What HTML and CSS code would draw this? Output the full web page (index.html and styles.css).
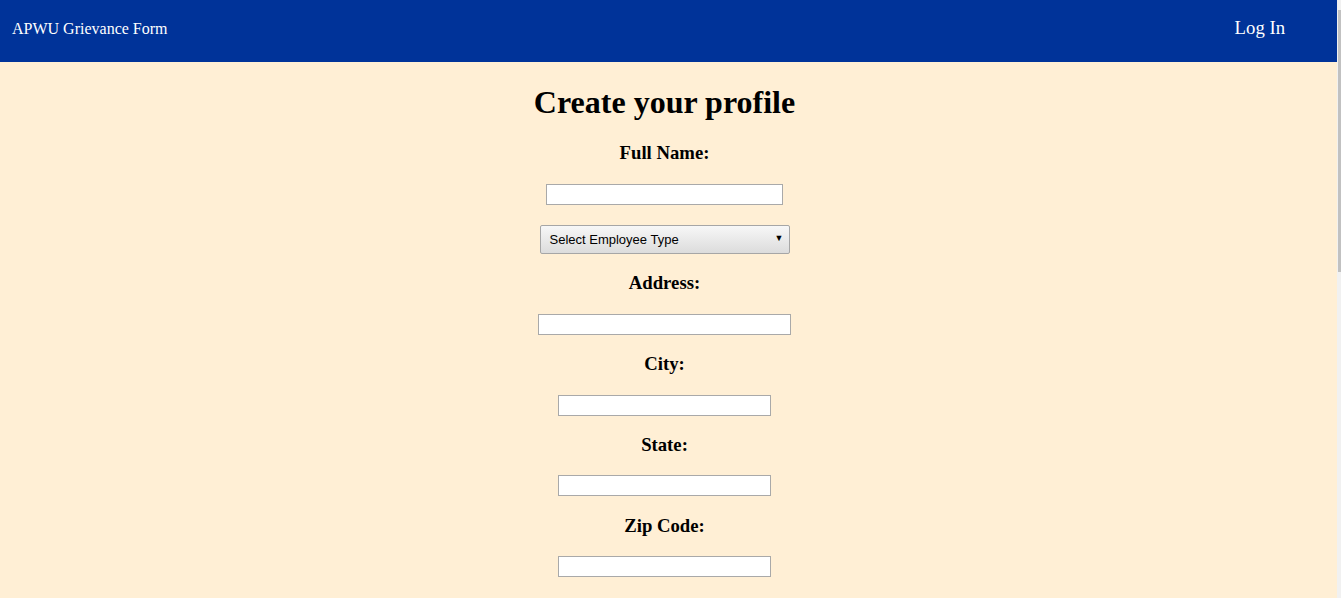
FILE: index.html
```html
<!DOCTYPE html>
<html lang="en">
<head>
<meta charset="utf-8">
<title>APWU Grievance Form</title>
<link rel="stylesheet" href="styles.css">
</head>
<body>
<div class="page">
  <header class="topbar">
    <a class="brand" href="#">APWU Grievance Form</a>
    <a class="login" href="#">Log In</a>
  </header>
  <main class="profile">
    <h1 class="title">Create your profile</h1>
    <form class="form">
      <h3 class="label">Full Name:</h3>
      <input class="field field-name" type="text">
      <div class="select">
        <span class="select-text">Select Employee Type</span>
        <span class="select-arrow">&#9660;</span>
      </div>
      <h3 class="label">Address:</h3>
      <input class="field field-address" type="text">
      <h3 class="label">City:</h3>
      <input class="field field-short" type="text">
      <h3 class="label">State:</h3>
      <input class="field field-short" type="text">
      <h3 class="label">Zip Code:</h3>
      <input class="field field-short" type="text">
    </form>
  </main>
</div>
<div class="scrollbar"><div class="thumb"></div></div>
</body>
</html>
```
FILE: styles.css
```css
html, body {
  margin: 0;
  height: 100%;
  overflow: hidden;
}
body {
  display: flex;
  background: #ffefd5;
  font-family: "Liberation Serif", "Times New Roman", serif;
}
.page {
  flex: 1;
  min-width: 0;
}
.topbar {
  height: 62px;
  background: #003399;
  display: flex;
  align-items: center;
  justify-content: space-between;
  padding: 0 52px 0 12px;
}
.brand {
  color: #ffffff;
  text-decoration: none;
  font-size: 16px;
  margin-top: -4px;
}
.login {
  color: #ffffff;
  text-decoration: none;
  font-size: 18.72px;
  margin-top: -6px;
}
.profile {
  padding-right: 8px;
  text-align: center;
}
.title {
  font-size: 32px;
  font-weight: bold;
  margin: 22px 0 21.44px;
  line-height: 37px;
}
.form {
  display: flex;
  flex-direction: column;
  align-items: center;
}
.label {
  font-size: 18.72px;
  font-weight: bold;
  margin: 18.72px 0;
  line-height: 22.5px;
}
.form .label:first-child {
  margin-top: 0;
}
.field {
  box-sizing: border-box;
  height: 21px;
  border: 1px solid #a9a9a9;
  background: #ffffff;
  padding: 0 2px;
  margin: 0;
  font-family: "Liberation Sans", Arial, sans-serif;
  font-size: 13px;
}
.field-name { width: 237px; }
.field-address { width: 253px; }
.field-short { width: 213px; }
.select {
  box-sizing: border-box;
  width: 250px;
  height: 29px;
  margin-top: 20px;
  border: 1px solid #a6a6a6;
  border-radius: 2px;
  background: linear-gradient(#f7f7f7, #dcdcdc);
  display: flex;
  align-items: center;
  justify-content: space-between;
  padding: 0 5px 0 9px;
  font-family: "Liberation Sans", Arial, sans-serif;
  font-size: 13px;
  color: #000;
}
.select-arrow {
  font-size: 9px;
  margin-top: -2px;
}
.scrollbar {
  width: 4px;
  background: #f1f1f1;
  flex-shrink: 0;
}
.thumb {
  margin-top: 10px;
  width: 3px;
  margin-left: 1px;
  height: 262px;
  background: #c1c1c1;
}
```
